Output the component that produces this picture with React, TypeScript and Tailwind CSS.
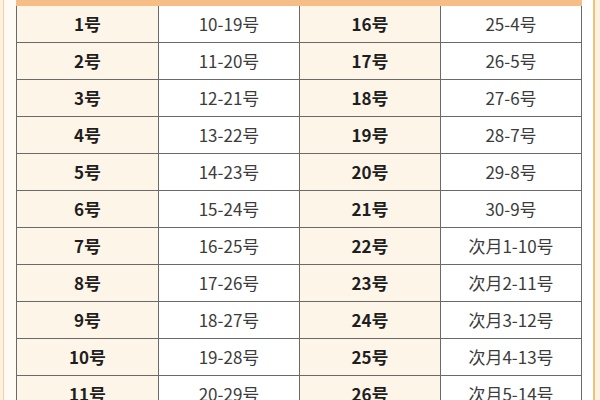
const rows: [string, string, string, string][] = [
  ['1号', '10-19号', '16号', '25-4号'],
  ['2号', '11-20号', '17号', '26-5号'],
  ['3号', '12-21号', '18号', '27-6号'],
  ['4号', '13-22号', '19号', '28-7号'],
  ['5号', '14-23号', '20号', '29-8号'],
  ['6号', '15-24号', '21号', '30-9号'],
  ['7号', '16-25号', '22号', '次月1-10号'],
  ['8号', '17-26号', '23号', '次月2-11号'],
  ['9号', '18-27号', '24号', '次月3-12号'],
  ['10号', '19-28号', '25号', '次月4-13号'],
  ['11号', '20-29号', '26号', '次月5-14号'],
];

const font = { fontFamily: '"Noto Sans CJK SC", "Noto Sans", sans-serif' };

export default function App() {
  return (
    <div className="flex w-[600px] h-[400px] overflow-hidden bg-[#fdf4e8]" style={font}>
      {/* left margin */}
      <div className="flex w-[16px] shrink-0">
        <div className="w-[3px] bg-[#fcf0df]" />
        <div className="w-[1px] bg-[#f2d3a8]" />
        <div className="flex-1 bg-[#fffaf2]" />
      </div>

      {/* table */}
      <div className="w-[566px] shrink-0 flex flex-col">
        <div className="h-[6px] bg-[#f7bd87] shrink-0" />
        <div className="border-l border-[#6a6a6a]">
          {rows.map((r) => (
            <div key={r[0]} className="flex h-[37px] border-b border-[#6a6a6a]">
              <div className="w-[142px] border-r border-[#6a6a6a] bg-[#fef5e9] flex items-center justify-center text-[17px] font-bold text-[#1e1e1e]">
                {r[0]}
              </div>
              <div className="w-[141px] border-r border-[#6a6a6a] bg-white flex items-center justify-center text-[17px] text-[#3c3c3c]">
                {r[1]}
              </div>
              <div className="w-[141px] border-r border-[#6a6a6a] bg-[#fef5e9] flex items-center justify-center text-[17px] font-bold text-[#1e1e1e]">
                {r[2]}
              </div>
              <div className="w-[141px] border-r border-[#6a6a6a] bg-white flex items-center justify-center text-[17px] text-[#3c3c3c]">
                {r[3]}
              </div>
            </div>
          ))}
        </div>
      </div>

      {/* right margin */}
      <div className="flex flex-1">
        <div className="w-[11px] bg-white" />
        <div className="w-[2px] bg-[#f0c07e]" />
        <div className="flex-1 bg-[#fdf1df]" />
      </div>
    </div>
  );
}
